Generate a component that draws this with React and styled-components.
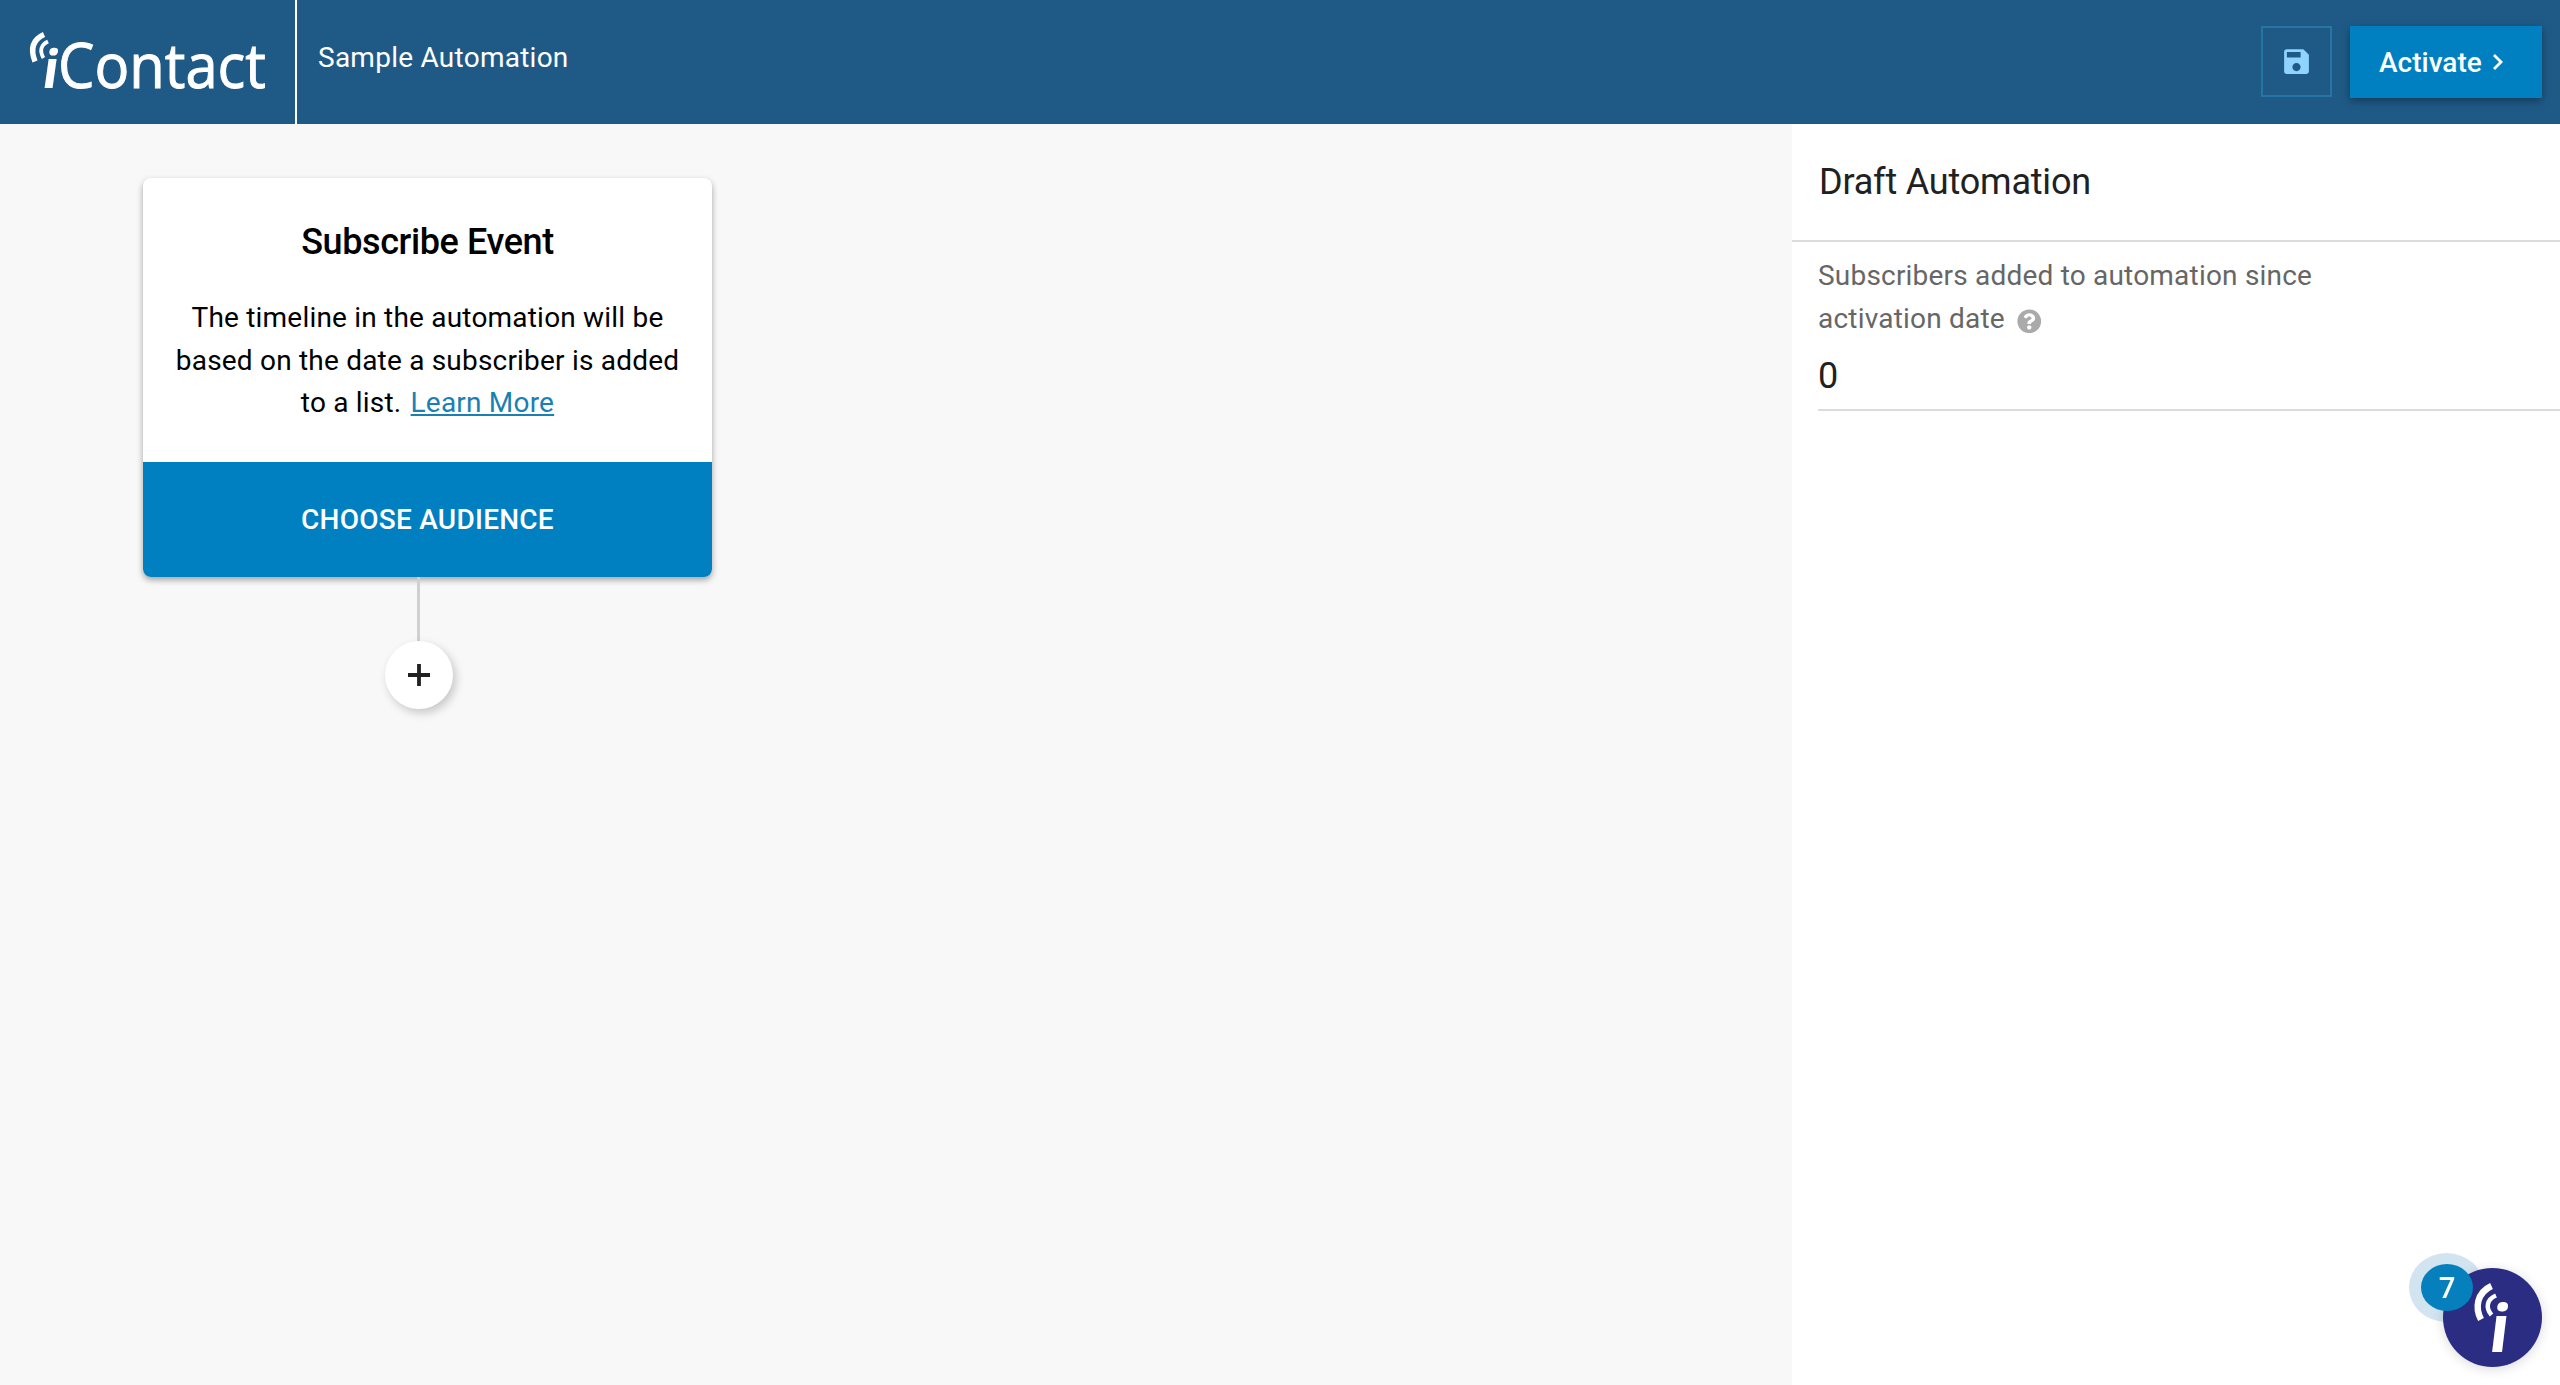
import React from 'react'
import styled, { createGlobalStyle } from "styled-components";
import { MdSave } from "react-icons/md";
import { FaQuestionCircle } from "react-icons/fa";

function Logo() {
    return (
        <LogoSvg viewBox="0 0 295 124">
            <path d="M44 34.5 C32 40 30.5 50 35 61.5" strokeWidth="5.4" />
            <path d="M48 41.5 C40.5 45 39.5 51 43.5 58" strokeWidth="3.8" />
            <text transform="translate(40.5 88) skewX(-8)" fontSize="53" fontWeight="700">i</text>
            <Wordmark x="58" y="88" fontSize="63" textLength="208" lengthAdjust="spacingAndGlyphs">Contact</Wordmark>
        </LogoSvg>
    )
}

function App() {
    return (
        <Page>
            <GlobalStyle />
            <Header>
                <Logo />
                <AutomationName>Sample Automation</AutomationName>
                <HeaderActions>
                    <SaveButton><MdSave /></SaveButton>
                    <ActivateButton>
                        Activate
                        <Chevron viewBox="0 0 12 18"><path d="M2 2 L9 9 L2 16" /></Chevron>
                    </ActivateButton>
                </HeaderActions>
            </Header>

            <Main>
                <Canvas>
                    <EventCard>
                        <EventBody>
                            <EventTitle>Subscribe Event</EventTitle>
                            <EventText>
                                The timeline in the automation will be<br />
                                based on the date a subscriber is added<br />
                                to a list. <LearnMore href="#">Learn More</LearnMore>
                            </EventText>
                        </EventBody>
                        <ChooseButton>CHOOSE AUDIENCE</ChooseButton>
                    </EventCard>
                    <StepColumn>
                        <Connector />
                        <AddButton>
                            <PlusIcon viewBox="0 0 22 22"><path d="M11 0 V22 M0 11 H22" /></PlusIcon>
                        </AddButton>
                    </StepColumn>
                </Canvas>

                <SidePanel>
                    <PanelHeader>Draft Automation</PanelHeader>
                    <Stat>
                        <StatLabel>
                            Subscribers added to automation since<br />
                            activation date <FaQuestionCircle />
                        </StatLabel>
                        <StatValue>0</StatValue>
                    </Stat>
                </SidePanel>
            </Main>

            <Chat>
                <BadgeHalo />
                <ChatBubble>
                    <svg viewBox="0 0 99 99">
                        <path d="M48.5 18 C33.5 25 32 40 38 51.5" strokeWidth="6.5" />
                        <path d="M53 27.5 C43.5 31.5 42.5 40 48.5 47" strokeWidth="4.5" />
                        <text transform="translate(44 84) skewX(-7)" fontSize="66" fontWeight="700">i</text>
                    </svg>
                </ChatBubble>
                <Badge>7</Badge>
            </Chat>
        </Page>
    )
}

export default App;


const GlobalStyle = createGlobalStyle`
    * {
        box-sizing: border-box;
    }
    body {
        margin: 0;
        font-family: Roboto, "Liberation Sans", sans-serif;
    }
    button {
        font-family: inherit;
        border: none;
        padding: 0;
    }
`;

const Page = styled.div`
    display: flex;
    flex-direction: column;
    height: 100vh;
    overflow: hidden;
`;

const Header = styled.header`
    display: flex;
    flex: none;
    height: 124px;
    color: #fff;
    background-color: #1f5a87;
`;

const LogoSvg = styled.svg`
    flex: none;
    width: 295px;
    height: 124px;
    fill: #fff;
    font-family: "Open Sans", "Noto Sans", sans-serif;

    path {
        fill: none;
        stroke: #fff;
    }
`;

const Wordmark = styled.text`
    stroke: #fff;
    stroke-width: 1px;
`;

const AutomationName = styled.div`
    border-left: 2px solid #fff;
    padding: 41px 0 0 21px;
    font-size: 28px;
    line-height: 33px;
    letter-spacing: 0.25px;
`;

const HeaderActions = styled.div`
    display: flex;
    gap: 18px;
    margin-left: auto;
    padding: 26px 18px 0 0;
`;

const SaveButton = styled.button`
    display: flex;
    align-items: center;
    justify-content: center;
    width: 71px;
    height: 71px;
    border: 2px solid #2576a6;
    background: none;
    color: #8fd3ff;
    font-size: 33px;
`;

const ActivateButton = styled.button`
    display: flex;
    align-items: center;
    width: 192px;
    height: 72px;
    padding-left: 29px;
    background-color: #007fc1;
    color: #fff;
    font-size: 28px;
    font-weight: 500;
    box-shadow: 0 3px 8px rgba(0, 0, 0, 0.35);
`;

const Chevron = styled.svg`
    width: 12px;
    height: 18px;
    margin-left: 10px;
    fill: none;
    stroke: #fff;
    stroke-width: 2.8;
`;

const Main = styled.main`
    display: flex;
    flex: 1;
`;

const Canvas = styled.section`
    flex: 1;
    padding: 54px 0 0 143px;
    background-color: #f8f8f8;
`;

const EventCard = styled.div`
    width: 569px;
    border-radius: 8px;
    overflow: hidden;
    background-color: #fff;
    text-align: center;
    box-shadow: 0 3px 6px rgba(0, 0, 0, 0.35);
`;

const EventBody = styled.div`
    height: 284px;
    padding-top: 40px;
    color: #000;
`;

const EventTitle = styled.h2`
    margin: 0 0 31px;
    font-size: 36px;
    font-weight: 500;
    line-height: 48px;
    letter-spacing: -0.4px;
`;

const EventText = styled.p`
    margin: 0;
    font-size: 28px;
    line-height: 42.7px;
    letter-spacing: 0.2px;
`;

const LearnMore = styled.a`
    margin-left: 2px;
    color: #1a7fb5;
`;

const ChooseButton = styled.button`
    display: block;
    width: 100%;
    height: 115px;
    background-color: #007fc1;
    color: #fff;
    font-size: 28px;
    font-weight: 500;
    letter-spacing: 0.25px;
`;

const StepColumn = styled.div`
    display: flex;
    flex-direction: column;
    align-items: center;
    width: 551px;
`;

const Connector = styled.div`
    width: 3px;
    height: 64px;
    background-color: #d0d0d0;
`;

const AddButton = styled.button`
    display: flex;
    align-items: center;
    justify-content: center;
    width: 68px;
    height: 68px;
    border-radius: 50%;
    background-color: #fff;
    box-shadow: 3px 4px 10px rgba(0, 0, 0, 0.2);
`;

const PlusIcon = styled.svg`
    width: 22px;
    height: 22px;
    stroke: #212121;
    stroke-width: 3.8;
`;

const SidePanel = styled.aside`
    width: 768px;
    background-color: #fff;
    color: #212121;
`;

const PanelHeader = styled.div`
    height: 118px;
    padding: 34px 0 0 27px;
    border-bottom: 2px solid #dcdcdc;
    font-size: 36px;
    line-height: 48px;
    letter-spacing: -0.2px;
`;

const Stat = styled.div`
    height: 169px;
    margin-left: 26px;
    padding-top: 12px;
    border-bottom: 2px solid #dcdcdc;
`;

const StatLabel = styled.div`
    color: #666;
    font-size: 28px;
    line-height: 43px;
    letter-spacing: 0.2px;

    svg {
        margin-left: 5px;
        color: #aaa;
        font-size: 24.5px;
        vertical-align: -5px;
    }
`;

const StatValue = styled.div`
    margin-top: 12px;
    font-size: 36px;
    line-height: 48px;
`;

/* floats over the page in the bottom right corner */
const Chat = styled.div`
    position: fixed;
    right: 18px;
    bottom: 18px;
    width: 99px;
    height: 99px;
`;

const BadgeHalo = styled.div`
    position: absolute;
    left: -34px;
    top: -15px;
    width: 75px;
    height: 69px;
    border-radius: 50%;
    background-color: #d3e4f1;
`;

const ChatBubble = styled.div`
    position: relative;
    width: 99px;
    height: 99px;
    border-radius: 50%;
    background-color: #2a2d82;
    box-shadow: 0 2px 12px rgba(0, 0, 0, 0.15);

    svg {
        display: block;
        overflow: visible;
        fill: #fff;
        font-family: "Open Sans", "Noto Sans", sans-serif;
    }
    path {
        fill: none;
        stroke: #fff;
    }
`;

const Badge = styled.div`
    position: absolute;
    left: -22px;
    top: -4px;
    width: 52px;
    height: 47px;
    border-radius: 50%;
    background-color: #0680bd;
    color: #fff;
    font-family: "Open Sans", "Noto Sans", sans-serif;
    font-size: 29px;
    font-weight: 600;
    line-height: 45px;
    text-align: center;
`;
